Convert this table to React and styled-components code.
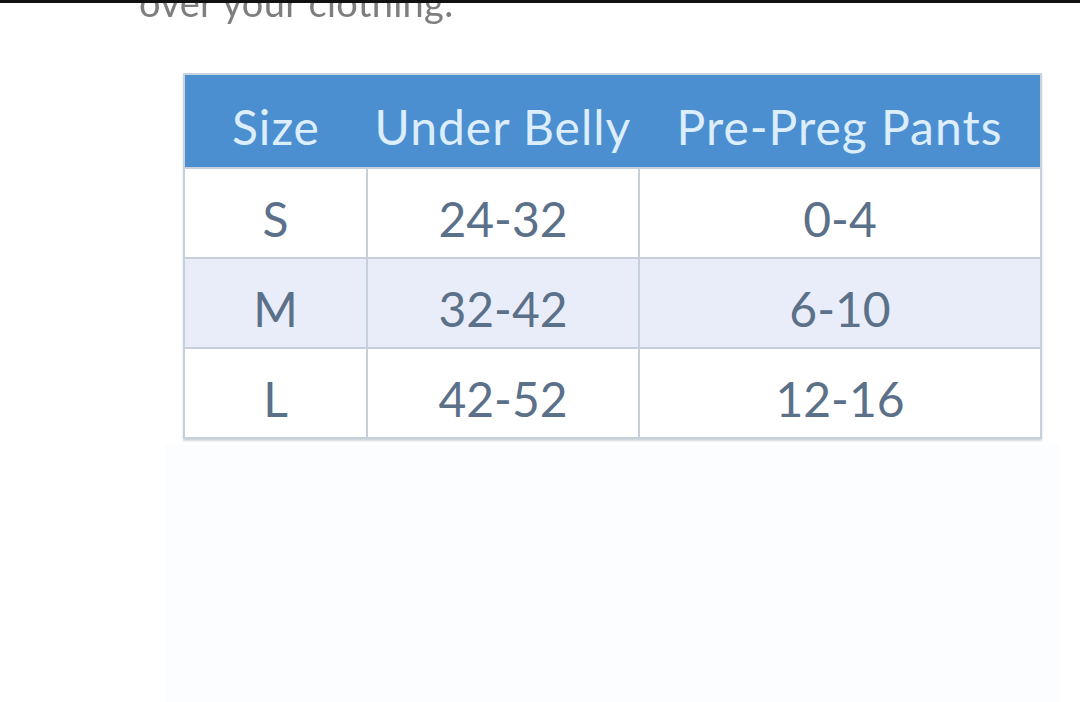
import styled, { createGlobalStyle } from "styled-components";

const sizes = [
  { size: "S", belly: "24-32", pants: "0-4" },
  { size: "M", belly: "32-42", pants: "6-10" },
  { size: "L", belly: "42-52", pants: "12-16" },
];

export default function App() {
  return (
    <>
      <GlobalStyle />
      <StyledPage>
        <StyledTopRule />
        <StyledCaptionClip>
          <StyledCaption>over your clothing.</StyledCaption>
        </StyledCaptionClip>
        <StyledTable>
          <colgroup>
            <col style={{ width: 183 }} />
            <col style={{ width: 272 }} />
            <col style={{ width: 402 }} />
          </colgroup>
          <thead>
            <tr>
              <StyledHeadCell>Size</StyledHeadCell>
              <StyledHeadCell>Under Belly</StyledHeadCell>
              <StyledHeadCell>Pre-Preg Pants</StyledHeadCell>
            </tr>
          </thead>
          <tbody>
            {sizes.map((row, index) => (
              <StyledRow key={row.size} $shaded={index === 1}>
                <StyledCell>{row.size}</StyledCell>
                <StyledCell>{row.belly}</StyledCell>
                <StyledCell>{row.pants}</StyledCell>
              </StyledRow>
            ))}
          </tbody>
        </StyledTable>
        <StyledFadedPanel />
      </StyledPage>
    </>
  );
}

const GlobalStyle = createGlobalStyle`
  html, body {
    margin: 0;
    padding: 0;
    background: #ffffff;
  }
  body {
    font-family: Lato, "Open Sans", sans-serif;
  }
`;

const StyledPage = styled.main`
  width: 1080px;
  height: 702px;
  overflow: hidden;
  display: flex;
  flex-direction: column;
  background: #ffffff;
`;

const StyledTopRule = styled.div`
  height: 3px;
  background: #111111;
  flex-shrink: 0;
`;

const StyledCaptionClip = styled.div`
  height: 27px;
  overflow: hidden;
  padding-left: 139px;
  flex-shrink: 0;
`;

const StyledCaption = styled.p`
  margin: -20px 0 0 0;
  font-size: 38px;
  line-height: 38px;
  letter-spacing: 0.3px;
  color: #7e7e7e;
  filter: blur(0.7px);
`;

const StyledTable = styled.table`
  margin: 43px 0 0 183px;
  width: 857px;
  table-layout: fixed;
  border-collapse: collapse;
  border: 2px solid #c9d3de;
  box-shadow: 0 2px 2px rgba(120, 135, 150, 0.35);
  flex-shrink: 0;
`;

const StyledHeadCell = styled.th`
  height: 82px;
  padding: 10px 0 0;
  background: #4b8fd1;
  color: #dcedfb;
  font-size: 48px;
  font-weight: 400;
  text-align: center;
  letter-spacing: 1px;
  border: none;
`;

const StyledRow = styled.tr`
  background: ${(props) => (props.$shaded ? "#e9edf9" : "#ffffff")};
`;

const StyledCell = styled.td`
  height: 78px;
  padding: 10px 0 0;
  border: 2px solid #c6d0dc;
  color: #5b7089;
  font-size: 48px;
  text-align: center;
`;

const StyledFadedPanel = styled.div`
  margin: 6px 20px 0 165px;
  flex: 1;
  background: #fcfdfe;
`;
